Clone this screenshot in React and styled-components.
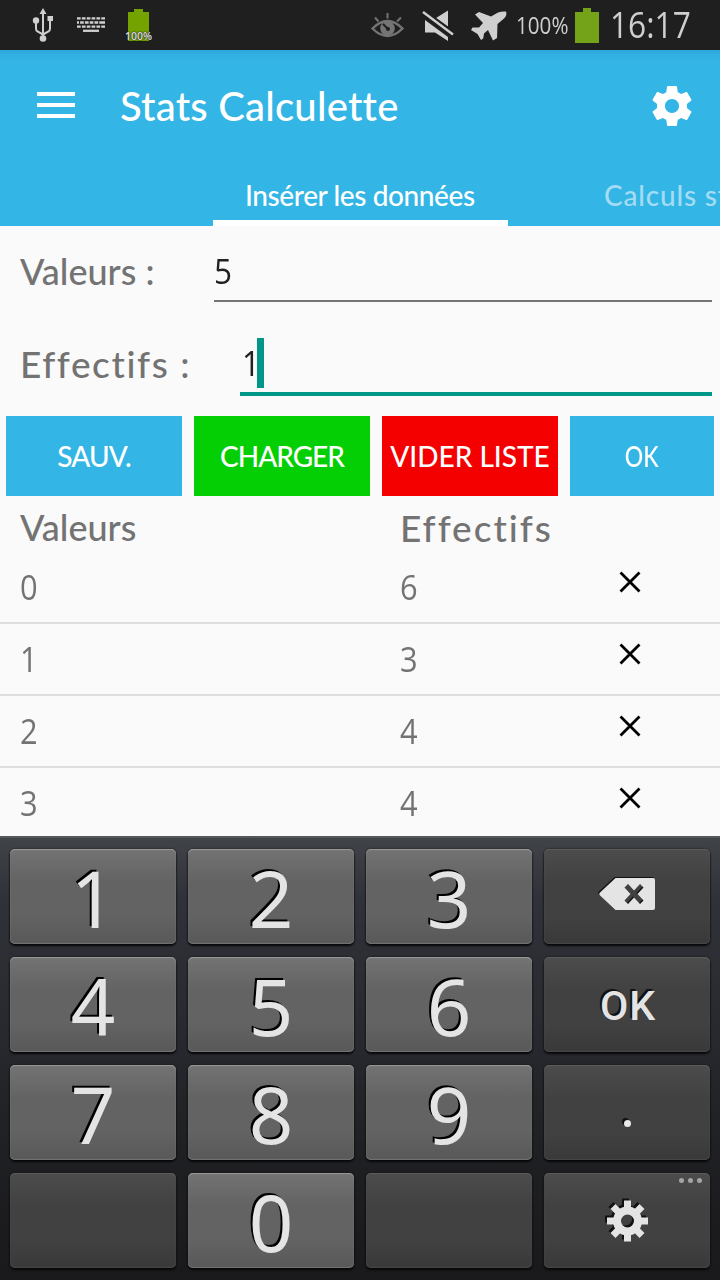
import React from "react";
import styled, { createGlobalStyle } from "styled-components";

const Global = createGlobalStyle`
  * { box-sizing: border-box; }
  body { margin: 0; background: #fafafa; overflow: hidden; }
`;

const Screen = styled.main`
  width: 720px;
  height: 1280px;
  display: flex;
  flex-direction: column;
  overflow: hidden;
  background: #fafafa;
  color: #737373;
  font-family: Lato, "Noto Sans", sans-serif;
`;

const Script = styled.span`
  display: inline-block;
  white-space: nowrap;
  line-height: 1;
  font-family: ${(p) => (p.$digits ? '"Open Sans", "Noto Sans", sans-serif' : 'Lato, "Noto Sans", sans-serif')};
  font-size: ${(p) => p.$size || 36}px;
  font-weight: 500;
  font-variant-ligatures: none;
  letter-spacing: ${(p) => p.$track || 0}px;
  transform: scaleX(${(p) => p.$stretch || 1});
  transform-origin: ${(p) => p.$origin || "left"} center;
`;

const StatusBar = styled.header`
  flex: none;
  height: 50px;
  display: flex;
  align-items: center;
  background: #1f1f1f;
  color: #cfcfcf;
`;

const StatusIcon = styled.svg`
  flex: none;
  display: block;
  margin-left: ${(p) => p.$gap || 0}px;
`;

const StatusText = styled.div`
  flex: none;
  display: flex;
  align-items: center;
  height: 50px;
  width: ${(p) => p.$width}px;
  margin-left: ${(p) => p.$gap}px;
`;

const BatteryBadge = styled.div`
  position: relative;
  margin-left: 20px;
  width: 28px;
  height: 34px;
`;

const BadgeText = styled.span`
  position: absolute;
  left: 0;
  bottom: 0;
  font: 600 10.5px/12px "Open Sans", sans-serif;
  color: #dcdcdc;
  text-shadow: 0 0 2px #222, 0 0 1px #222;
`;

const AppBar = styled.div`
  flex: none;
  height: 176px;
  background: linear-gradient(#2ca6d9 0, #31b0e2 5px, #33b5e5 14px);
  color: #fff;
`;

const Toolbar = styled.div`
  height: 112px;
  display: flex;
  align-items: center;
  padding: 0 24px 0 37px;
`;

const MenuIcon = styled.div`
  width: 38px;
  height: 26px;
  margin-top: -2px;
  display: flex;
  flex-direction: column;
  justify-content: space-between;
  &::before, &::after { content: ""; height: 4px; background: #fff; }
`;

const MenuBar = styled.i`
  height: 4px;
  background: #fff;
`;

const Title = styled.h1`
  display: flex;
  margin: 0 auto 0 45px;
  padding-bottom: 1px;
`;

const Tabs = styled.nav`
  display: flex;
  height: 64px;
  padding-left: 213px;
`;

const Tab = styled.div`
  flex: none;
  display: flex;
  align-items: flex-start;
  width: 295px;
  padding: 19px 0 0 ${(p) => p.$inset}px;
  border-bottom: 6px solid ${(p) => (p.$active ? "#fff" : "transparent")};
  color: ${(p) => (p.$active ? "#fff" : "#a3dcf4")};
`;

const Form = styled.section`
  flex: none;
  height: 190px;
  padding: 0 8px 0 20px;
`;

const Field = styled.label`
  display: flex;
  height: ${(p) => p.$height}px;
`;

const FieldName = styled.span`
  display: flex;
  align-items: flex-start;
  width: ${(p) => p.$width}px;
  padding-top: ${(p) => p.$drop}px;
`;

const FieldInput = styled.span`
  flex: 1;
  display: flex;
  align-items: flex-start;
  padding: ${(p) => (p.$focused ? "36px 0 0 2px" : "27px 0 0")};
  color: #212121;
  border-bottom: ${(p) => (p.$focused ? "4px solid #009688" : "2px solid #757575")};
`;

const Digit = styled.span`
  display: flex;
  width: 15px;
  padding-top: 7px;
`;

const Caret = styled.i`
  width: 7px;
  height: 50px;
  background: #009688;
`;

const Actions = styled.div`
  flex: none;
  display: grid;
  grid-template-columns: 176px 176px 176px 144px;
  gap: 12px;
  height: 80px;
  padding: 0 6px;
`;

const Action = styled.button`
  display: flex;
  align-items: center;
  justify-content: center;
  padding: 0;
  border: 0;
  background: ${(p) => p.$color};
  color: #fff;
`;

const Columns = styled.div`
  flex: none;
  display: grid;
  grid-template-columns: 380px 218px 1fr;
  align-items: center;
  height: 56px;
  padding: 6px 0 0 20px;
`;

const Row = styled(Columns)`
  height: 72px;
  padding: 0 0 2px 20px;
  border-bottom: 2px solid #dedede;
`;

const List = styled.section`
  flex: none;
  height: 284px;
  overflow: hidden;
`;

const RemoveIcon = styled.svg`
  display: block;
  margin-top: -8px;
`;

const Keyboard = styled.section`
  flex: none;
  height: 444px;
  display: grid;
  grid-template-columns: repeat(4, 166px);
  grid-auto-rows: 95px;
  gap: 13px 12px;
  padding: 11px 10px 0;
  border-top: 2px solid #55575a;
  background: linear-gradient(#404348 0, #303239 60px, #2a2b31 170px, #1f2023 310px, #19191b 100%);
`;

const Key = styled.button`
  position: relative;
  display: flex;
  align-items: center;
  justify-content: center;
  padding: 0;
  border: 0;
  border-radius: 5px;
  color: #e4e4e4;
  background: ${(p) =>
    p.$dark
      ? "linear-gradient(#4c4c4c 0, #414141 35%, #414141 70%, #393939 100%)"
      : "linear-gradient(#737373 0, #636363 35%, #636363 70%, #585858 100%)"};
  box-shadow: inset 0 1px 1px ${(p) => (p.$dark ? "#5c5c5c" : "#999")},
    inset 0 -1px 1px ${(p) => (p.$dark ? "#484848" : "#747474")}, 0 2px 2px #08080a, 0 0 2px #111;
`;

const KeyDigit = styled.span`
  font: 400 78px/95px "Noto Sans", sans-serif;
  padding-top: 4px;
  text-shadow: -2px -2px 0 #000;
`;

const KeyWord = styled.span`
  font: 500 41px/95px Roboto, sans-serif;
  letter-spacing: 1px;
  padding: 3px 0 0 2px;
  text-shadow: -2px -2px 0 #111;
`;

const KeyDot = styled.i`
  width: 7px;
  height: 7px;
  margin-top: 21px;
  border-radius: 50%;
  background: #e8e8e8;
  box-shadow: -2px -2px 0 #111;
`;

const KeyIcon = styled.svg`
  display: block;
  overflow: visible;
  margin-top: ${(p) => p.$shift || 0}px;
  filter: drop-shadow(${(p) => p.$depth || -2}px ${(p) => p.$depth || -2}px 0 #111);
`;

const More = styled.div`
  position: absolute;
  top: 5px;
  right: 8px;
  display: flex;
  gap: 4px;
`;

const MoreDot = styled.i`
  width: 5px;
  height: 5px;
  border-radius: 50%;
  background: #a4a4a4;
`;

const entries = [
  ["0", "6"],
  ["1", "3"],
  ["2", "4"],
  ["3", "4"],
];

function UsbIcon() {
  return (
    <StatusIcon $gap={32} width="22" height="34" viewBox="0 0 22 34" fill="#cfcfcf">
      <path d="M11 5v24M11 26.500l-5.500-3q-1.500-1-1.500-3v-7M11 26.500l5.500-3q1.500-1 1.500-3V12" fill="none" stroke="#cfcfcf" strokeWidth="2" />
      <path d="M11 0l3.500 6h-7z" />
      <circle cx="4" cy="12.500" r="3.200" />
      <path d="M15.500 8h5.500v5h-5.500z" />
      <circle cx="11" cy="30.500" r="3.300" />
    </StatusIcon>
  );
}

function KeyboardIcon() {
  return (
    <StatusIcon $gap={23} width="28" height="16" viewBox="0 0 28 16" stroke="#cfcfcf" fill="none" strokeWidth="2.3">
      <path d="M0 1.400h28M0 9.600h28" strokeDasharray="3.700 1.160" />
      <path d="M0 5.500h28" strokeDasharray="2 1.100 3.700 1.100 3.700 1.100 3.700 1.100 3.700 1.100 6" />
      <path d="M6 13.800h16" />
    </StatusIcon>
  );
}

function EyeIcon() {
  return (
    <StatusIcon $gap={218} width="34" height="26" viewBox="0 0 34 26" fill="none" stroke="#747474">
      <path d="M1.500 16.500Q9 9 16.500 9T31.500 16.500Q24 24 16.500 24T1.500 16.500z" strokeWidth="2.400" />
      <circle cx="16.500" cy="16.500" r="7.300" fill="#747474" stroke="none" />
      <path d="M12 12l4.500 4.500" stroke="#1f1f1f" strokeWidth="2" />
      <circle cx="17" cy="17" r="2" fill="#1f1f1f" stroke="none" />
      <path d="M16.500 1v5.500M4 5.500l3.500 4M30 5.500l-4 4" strokeWidth="2" />
    </StatusIcon>
  );
}

function MuteIcon() {
  return (
    <StatusIcon $gap={17} width="32" height="31" viewBox="0 0 32 31" fill="#cfcfcf">
      <path d="M3 10l23 17v4l-13-8.500H3zM14 8L26 .500v16z" />
      <path d="M2 2l29 22" stroke="#1f1f1f" strokeWidth="5.200" />
      <path d="M1 2l30 22.500" stroke="#cfcfcf" strokeWidth="2.400" />
    </StatusIcon>
  );
}

function PlaneIcon() {
  return (
    <StatusIcon $gap={16} width="38" height="31" viewBox="0 0 38 31" fill="#cfcfcf">
      <path d="M5 4.500l4-2.500 12 4.500 7-4Q32 1 36 1.500 37.500 5 34 8.500L27.500 14l-.5 14-4 2.500-5-10.500-4 3.500-.8 5-2.200 1.500-3.500-6-6.500-4 1.500-2.500h6.500l4-4.500z" />
    </StatusIcon>
  );
}

function GearIcon() {
  return (
    <svg width="48" height="48" viewBox="0 0 24 24" fill="#fff">
      <path d="M19.430 12.980c.04-.32.07-.64.07-.98s-.03-.66-.07-.98l2.110-1.650c.19-.15.24-.42.12-.64l-2-3.460c-.12-.22-.39-.3-.61-.22l-2.490 1c-.52-.4-1.080-.73-1.690-.98l-.38-2.650C14.460 2.180 14.250 2 14 2h-4c-.25 0-.46.18-.49.42l-.38 2.650c-.61.25-1.170.59-1.690.98l-2.490-1c-.23-.09-.49 0-.61.22l-2 3.460c-.13.22-.07.49.12.64l2.110 1.650c-.04.32-.07.65-.07.98s.03.66.07.98l-2.110 1.650c-.19.15-.24.42-.12.64l2 3.460c.12.22.39.3.61.22l2.490-1c.52.4 1.080.73 1.690.98l.38 2.650c.03.24.24.42.49.42h4c.25 0 .46-.18.49-.42l.38-2.650c.61-.25 1.170-.59 1.690-.98l2.490 1c.23.09.49 0 .61-.22l2-3.460c.12-.22.07-.49-.12-.64l-2.110-1.650zM12 15.500c-1.930 0-3.500-1.570-3.500-3.500s1.570-3.500 3.500-3.500 3.500 1.570 3.500 3.500-1.570 3.500-3.500 3.500z" />
    </svg>
  );
}

function KeyGear() {
  return (
    <KeyIcon width="42" height="42" viewBox="-21.500 -21 42 42">
      <circle r="10.500" fill="none" stroke="#e4e4e4" strokeWidth="8" />
      {[0, 45, 90, 135, 180, 225, 270, 315].map((angle) => (
        <path key={angle} d="M-3.500-20.500h7v8h-7z" fill="#e4e4e4" transform={`rotate(${angle})`} />
      ))}
    </KeyIcon>
  );
}

function Backspace() {
  return (
    <KeyIcon width="56" height="32" viewBox="0 0 56 32" $shift={-6} $depth={-1}>
      <path
        fillRule="evenodd"
        fill="#e4e4e4"
        d="M16.500 0H54q2 0 2 2v28q0 2-2 2H16.500L1 17.500q-1.500-1.500 0-3zM29 6l-3.500 3.500 6 6.500-6 6.500L29 26l6-6.500 6 6.500 3.500-3.500-6-6.500 6-6.500L41 6l-6 6.500z"
      />
    </KeyIcon>
  );
}

function NumberKey({ children }) {
  return (
    <Key>
      <KeyDigit>{children}</KeyDigit>
    </Key>
  );
}

export default function App() {
  return (
    <Screen>
      <Global />
      <StatusBar>
        <UsbIcon />
        <KeyboardIcon />
        <BatteryBadge>
          <StatusIcon width="28" height="34" viewBox="0 0 28 34">
            <path d="M9 1h9v3h6v29H3V4h6z" fill="#74a300" />
          </StatusIcon>
          <BadgeText>100%</BadgeText>
        </BatteryBadge>
        <EyeIcon />
        <MuteIcon />
        <PlaneIcon />
        <StatusText $gap={8} $width={54}>
          <Script $digits $size={24} $stretch={0.86}>100%</Script>
        </StatusText>
        <StatusIcon $gap={5} width="24" height="35" viewBox="0 0 24 35">
          <path d="M8 0h8v4h8v31H0V4h8z" fill="#74a319" />
        </StatusIcon>
        <StatusText $gap={11} $width={100}>
          <Script $digits $size={36} $stretch={0.88}>16:17</Script>
        </StatusText>
      </StatusBar>

      <AppBar>
        <Toolbar>
          <MenuIcon><MenuBar /></MenuIcon>
          <Title><Script $size={40} $track={0.2}>Stats Calculette</Script></Title>
          <GearIcon />
        </Toolbar>
        <Tabs>
          <Tab $active $inset={32}><Script $size={28} $track={-0.4}>Insérer les données</Script></Tab>
          <Tab $inset={96}><Script $size={28} $track={0.8}>Calculs statistiques</Script></Tab>
        </Tabs>
      </AppBar>

      <Form>
        <Field $height={76}>
          <FieldName $width={194} $drop={27}><Script>Valeurs :</Script></FieldName>
          <FieldInput><Script $digits $size={35} $stretch={0.9}>5</Script></FieldInput>
        </Field>
        <Field $height={94}>
          <FieldName $width={220} $drop={43}><Script $size={37} $track={1.6}>Effectifs :</Script></FieldName>
          <FieldInput $focused>
            <Digit><Script $digits $size={35} $stretch={0.9}>1</Script></Digit>
            <Caret />
          </FieldInput>
        </Field>
      </Form>

      <Actions>
        <Action $color="#33b5e5"><Script $size={28} $track={-0.9} $origin="center">SAUV.</Script></Action>
        <Action $color="#04cf04"><Script $size={28} $track={-1} $origin="center">CHARGER</Script></Action>
        <Action $color="#f50000"><Script $size={28} $origin="center">VIDER LISTE</Script></Action>
        <Action $color="#33b5e5"><Script $size={28} $stretch={0.82} $origin="center">OK</Script></Action>
      </Actions>

      <Columns>
        <Script>Valeurs</Script>
        <Script $size={37} $track={2}>Effectifs</Script>
      </Columns>
      <List>
        {entries.map(([value, count]) => (
          <Row key={value}>
            <Script $digits $size={35} $stretch={0.88}>{value}</Script>
            <Script $digits $size={35} $stretch={0.88}>{count}</Script>
            <RemoveIcon width="24" height="24" viewBox="0 0 24 24" fill="none" stroke="#000" strokeWidth="2.8">
              <path d="M2.500 2.500l19 19M21.500 2.500l-19 19" />
            </RemoveIcon>
          </Row>
        ))}
      </List>

      <Keyboard>
        <NumberKey>1</NumberKey>
        <NumberKey>2</NumberKey>
        <NumberKey>3</NumberKey>
        <Key $dark><Backspace /></Key>
        <NumberKey>4</NumberKey>
        <NumberKey>5</NumberKey>
        <NumberKey>6</NumberKey>
        <Key $dark><KeyWord>OK</KeyWord></Key>
        <NumberKey>7</NumberKey>
        <NumberKey>8</NumberKey>
        <NumberKey>9</NumberKey>
        <Key $dark><KeyDot /></Key>
        <Key $dark />
        <NumberKey>0</NumberKey>
        <Key $dark />
        <Key $dark>
          <KeyGear />
          <More><MoreDot /><MoreDot /><MoreDot /></More>
        </Key>
      </Keyboard>
    </Screen>
  );
}
